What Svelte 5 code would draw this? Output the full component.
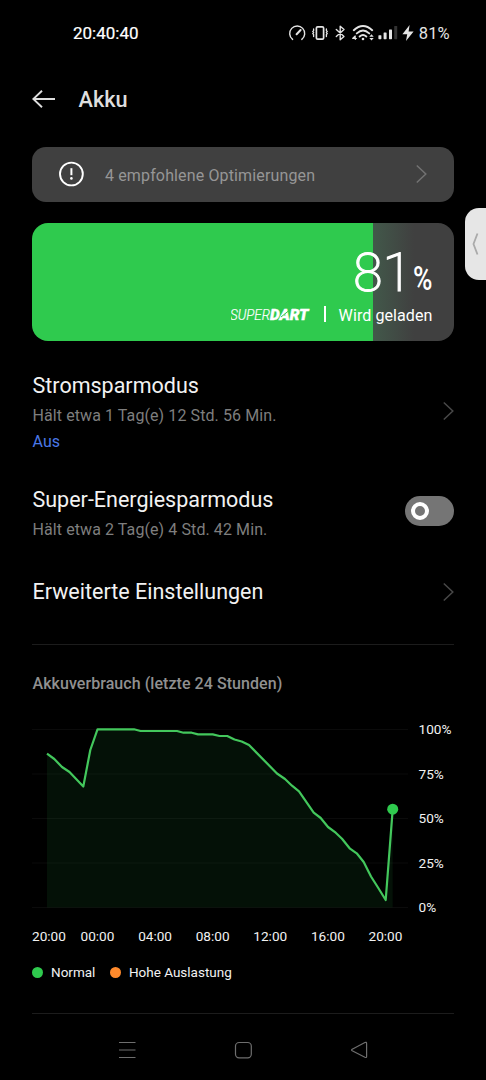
<script>
  const points = [
    [47, 753.7], [54.3, 759], [62, 767], [69.5, 772], [83.3, 786.5], [90.3, 750], [97.5, 729.3],
    [134, 729.3], [140.5, 731], [177, 731], [183.5, 732.7], [191.7, 732.7], [198, 734.4], [212.7, 734.4],
    [219.5, 736], [227.3, 736], [234.5, 739.5], [241.7, 741.5], [249, 745], [277, 773.5], [285, 779],
    [292, 785.7], [299, 791.3], [313.7, 812.7], [320.7, 818], [328, 827], [335.7, 832.7], [342, 838.7],
    [350, 848.7], [356.7, 853.3], [363.7, 862], [371, 876.5], [378.3, 888], [385.7, 900], [392.7, 809.3]
  ].map(([x, y]) => [x - 32, y - 719]);
  const line = points.map((p) => p.join(',')).join(' ');
  const area = `15,188.5 ${line} 360.7,188.5`;
  const grid = [10.5, 55, 99.5, 144, 188.5];
  const levels = ['100%', '75%', '50%', '25%', '0%'];
  const hours = ['00:00', '04:00', '08:00', '12:00', '16:00', '20:00'];
  let saver = $state(false);
</script>

{#snippet chevron()}
  <svg class="chevron" width="12" height="20" viewBox="0 0 12 20"><path d="M1.8 1.5 10.8 10 1.8 18.5" /></svg>
{/snippet}

<div class="phone">
  <header class="status">
    <span class="clock">20:40:40</span>
    <div class="indicators">
      <svg width="130" height="20" viewBox="288 23 130 20">
        <g fill="none" stroke="#e4e4e4" stroke-width="1.4" stroke-linecap="round">
          <path d="M292.6 39.4A7.5 7.5 0 1 1 301.8 39.4" />
          <path d="M296.6 34.2 300.6 30" stroke-width="2" />
          <rect x="316.4" y="26.8" width="7.2" height="12.4" rx="1.3" stroke-width="1.7" />
          <path d="M313.6 29v1.6l-.8 1 .8 1-.8 1 .8 1v2M326.4 29v1.6l.8 1-.8 1 .8 1-.8 1v2" stroke-width="1.3" />
          <path d="M336.3 29.5 344 36.4 340.2 39.8V26.2L344 29.6 336.3 36.5" stroke-linejoin="round" />
          <path d="M353.8 30.2Q363 21.8 372.2 30.2M356.8 33.4Q363 27.8 369.2 33.4M359.7 36.5Q363 33.6 366.3 36.5" stroke-width="1.9" />
        </g>
        <g fill="#e4e4e4">
          <circle cx="363" cy="39" r="1.3" />
          <path d="M355.8 35.4v2.6h1v.9h-1V40h-1v-1.1h-2.6v-.9l2.6-2.6zM371.5 34.2l2.2 2.6h-4.4zM371.5 40.4l-2.2-2.4h4.4z" />
          <rect x="378.4" y="35.2" width="3" height="4" rx=".6" />
          <rect x="383.6" y="32.5" width="3" height="6.7" rx=".6" />
          <rect x="389" y="29.6" width="3" height="9.6" rx=".6" />
          <rect x="394.2" y="26" width="3" height="13.2" rx=".6" fill="#333" />
          <path d="M409.6 25 402.4 34.2h4.8l-1.2 6.8 7.6-9.4h-5z" />
        </g>
      </svg>
      <span>81%</span>
    </div>
  </header>

  <div class="title-bar">
    <svg width="24" height="20" viewBox="0 0 24 20"><path d="M23 10H1.5M10 1.8 1.3 10 10 18.2" /></svg>
    <h1>Akku</h1>
  </div>

  <button class="banner">
    <svg width="26" height="26" viewBox="0 0 26 26">
      <circle cx="13.4" cy="13" r="11.4" fill="none" stroke="#fff" stroke-width="1.9" />
      <path d="M13.4 7.2v7" stroke="#fff" stroke-width="2" /><circle cx="13.4" cy="17.4" r="1.3" fill="#fff" />
    </svg>
    <span>4 empfohlene Optimierungen</span>
    {@render chevron()}
  </button>

  <section class="battery">
    <div class="percent"><span class="num">81</span><span class="sign">%</span></div>
    <div class="charge">
      <svg width="82" height="16" viewBox="0 0 82 16">
        <text x="-1" y="12.5" font-size="14" font-weight="300" textLength="40" lengthAdjust="spacingAndGlyphs" stroke="#fff" stroke-width=".2">SUPER</text>
        <text x="39" y="12.5" font-size="14" font-weight="900" textLength="38.5" lengthAdjust="spacingAndGlyphs" stroke="#fff" stroke-width=".4">DART</text>
        <path d="M60.5 1.5 50 10" stroke="#2fca4e" stroke-width="1" />
      </svg>
      <i></i>
      <span>Wird geladen</span>
    </div>
  </section>

  <main>
    <div class="row first">
      <div><h2>Stromsparmodus</h2><p>Hält etwa 1 Tag(e) 12 Std. 56 Min.</p><p class="state">Aus</p></div>
      {@render chevron()}
    </div>
    <div class="row second">
      <div><h2>Super-Energiesparmodus</h2><p>Hält etwa 2 Tag(e) 4 Std. 42 Min.</p></div>
      <button class="toggle" class:on={saver} aria-label="Super-Energiesparmodus" onclick={() => (saver = !saver)}><b></b></button>
    </div>
    <div class="row third">
      <h2>Erweiterte Einstellungen</h2>
      {@render chevron()}
    </div>
  </main>

  <section class="usage">
    <h3>Akkuverbrauch (letzte 24 Stunden)</h3>
    <div class="plot">
      <svg width="376" height="196" viewBox="0 0 376 196">
        {#each grid as y}<path d="M0 {y}H376" stroke="#0b0b0b" />{/each}
        <polygon points={area} fill="#2fca4e" fill-opacity=".085" />
        <polyline points={line} fill="none" stroke="#43c75c" stroke-width="2.2" stroke-linejoin="round" />
        <circle cx="360.7" cy="90.2" r="5.5" fill="#2fca4e" />
      </svg>
      <div class="levels">{#each levels as l}<span>{l}</span>{/each}</div>
    </div>
    <div class="hours"><span class="start">20:00</span>{#each hours as h}<span>{h}</span>{/each}</div>
    <div class="legend"><i></i><span>Normal</span><i class="high"></i><span>Hohe Auslastung</span></div>
  </section>

  <nav>
    <svg width="20" height="20" viewBox="0 0 20 20"><path d="M2 2.5h16.5M2 10h16.5M2 17.5h16.5" /></svg>
    <svg width="20" height="20" viewBox="0 0 20 20"><rect x="2.5" y="2.5" width="15.8" height="15.4" rx="3.6" /></svg>
    <svg width="20" height="20" viewBox="0 0 20 20"><path d="M3.2 9.2 15.9 2.5Q17.6 1.8 17.6 3.4V16.4Q17.6 18 15.9 17.3L3.2 10.8Q2 10 3.2 9.2Z" /></svg>
  </nav>

  <aside><svg width="10" height="24" viewBox="0 0 10 24"><path d="M6.5 1.5 2.5 12 6.5 22.5" /></svg></aside>
</div>

<style>
  :global(body) { background: #000; }
  .phone { position: relative; width: 486px; height: 1080px; overflow: hidden; background: #000; color: #f2f2f2; font-family: Roboto, sans-serif; display: flex; flex-direction: column; box-sizing: border-box; padding: 0 32px; }
  .phone > :global(*) { flex-shrink: 0; }
  h1, h2, h3, p { margin: 0; font-weight: 400; }
  button { border: 0; padding: 0; font: inherit; }
  svg { display: block; flex: none; }
  .status { height: 66px; display: flex; align-items: center; justify-content: space-between; padding: 0 4.5px 0 41px; font-size: 16.5px; box-sizing: border-box; }
  .clock { font-size: 17px; color: #fff; -webkit-text-stroke: .2px #fff; }
  .indicators { display: flex; align-items: center; gap: 1px; color: #e4e4e4; }
  .title-bar { height: 66px; display: flex; align-items: center; gap: 22.5px; }
  .title-bar path { fill: none; stroke: #dedede; stroke-width: 1.9; }
  h1 { font-size: 21.7px; font-weight: 500; color: #dedede; }
  .banner { margin-top: 15px; height: 54.5px; border-radius: 14px; background: #404040; display: flex; align-items: center; padding: 0 27px 0 26px; color: #969696; font-size: 16px; text-align: left; }
  .banner span { flex: 1; margin-left: 21px; letter-spacing: .14px; padding-top: 2px; }
  .chevron path { fill: none; stroke: #484848; stroke-width: 1.5; }
  .banner .chevron path { stroke: #727272; }
  .battery { margin-top: 21.5px; height: 117.5px; box-sizing: border-box; border-radius: 16px; background: linear-gradient(90deg, #2fca4e 341.5px, #42584a 341.5px, #404040 382px); padding: 18px 21.5px 0 0; display: flex; flex-direction: column; align-items: flex-end; color: #fff; }
  .percent { display: flex; align-items: baseline; height: 64px; }
  .num { font-size: 54px; font-weight: 200; line-height: 64px; letter-spacing: -.4px; margin-right: .8px; -webkit-text-stroke: 1px #fff; }
  .sign { font-size: 33px; width: 20px; transform: translateY(-1px) scaleX(.8); transform-origin: 0 0; font-weight: 500; }
  .charge { display: flex; align-items: center; height: 20px; font-size: 16.1px; letter-spacing: .05px; }
  .charge text { fill: #fff; font-family: Roboto, sans-serif; font-style: italic; letter-spacing: 0; }
  .charge i { width: 2px; height: 16px; background: #fff; margin: 0 12.5px 0 11.5px; position: relative; top: -1px; }
  main { padding-top: 30.5px; }
  .row { display: flex; justify-content: space-between; align-items: center; }
  .first { height: 82px; }
  .first :global(.chevron) { margin-bottom: 3px; }
  .second { height: 60px; margin-top: 31px; }
  .third { height: 30px; margin-top: 32.5px; }
  h2 { font-size: 21.5px; line-height: 32px; margin-left: .5px; }
  p { font-size: 16px; line-height: 28px; color: #7e7e7e; letter-spacing: .09px; margin-left: .5px; }
  .state { line-height: 24px; color: #4a78e8; }
  .toggle { width: 49px; height: 30px; border-radius: 15px; background: #757575; display: flex; align-items: center; align-self: flex-start; margin-top: 12px; padding: 0 6px; }
  .toggle.on { background: #2fca4e; justify-content: flex-end; }
  .toggle b { width: 18px; height: 18px; box-sizing: border-box; border: 4px solid #fff; border-radius: 50%; }
  .usage { margin-top: 37.5px; border-top: 1px solid #1c1c1c; border-bottom: 1px solid #1c1c1c; height: 368px; }
  h3 { margin: 28px 0 0 .5px; font-size: 16px; line-height: 22px; font-weight: 500; color: #909090; letter-spacing: .06px; }
  .plot { margin-top: 23.5px; display: flex; height: 196px; }
  .levels { margin-left: 10.5px; display: flex; flex-direction: column; font-size: 13.6px; line-height: 44.6px; margin-top: -11.5px; }
  .hours { margin-top: 11px; display: flex; font-size: 13.6px; line-height: 20px; }
  .hours span { flex: 0 0 57.6px; text-align: center; }
  .hours .start { flex-basis: 36.7px; text-align: left; }
  .legend { margin-top: 17.5px; display: flex; align-items: center; font-size: 13.5px; line-height: 18px; }
  .legend i { width: 11px; height: 11px; border-radius: 50%; background: #2fca4e; margin-right: 8px; }
  .legend .high { background: #ff8a2c; margin-left: 14.5px; }
  nav { height: 66px; box-sizing: border-box; display: flex; justify-content: space-between; align-items: center; padding: 6px 85px 0; }
  nav path, nav rect { fill: none; stroke: #6e6e6e; stroke-width: 1.2; }
  aside { position: absolute; right: 0; top: 208px; width: 21px; height: 72px; border-radius: 14px 0 0 14px; background: #e6e6e6; display: flex; align-items: center; justify-content: center; }
  aside path { fill: none; stroke: #aaa; stroke-width: 1.8; }
</style>
